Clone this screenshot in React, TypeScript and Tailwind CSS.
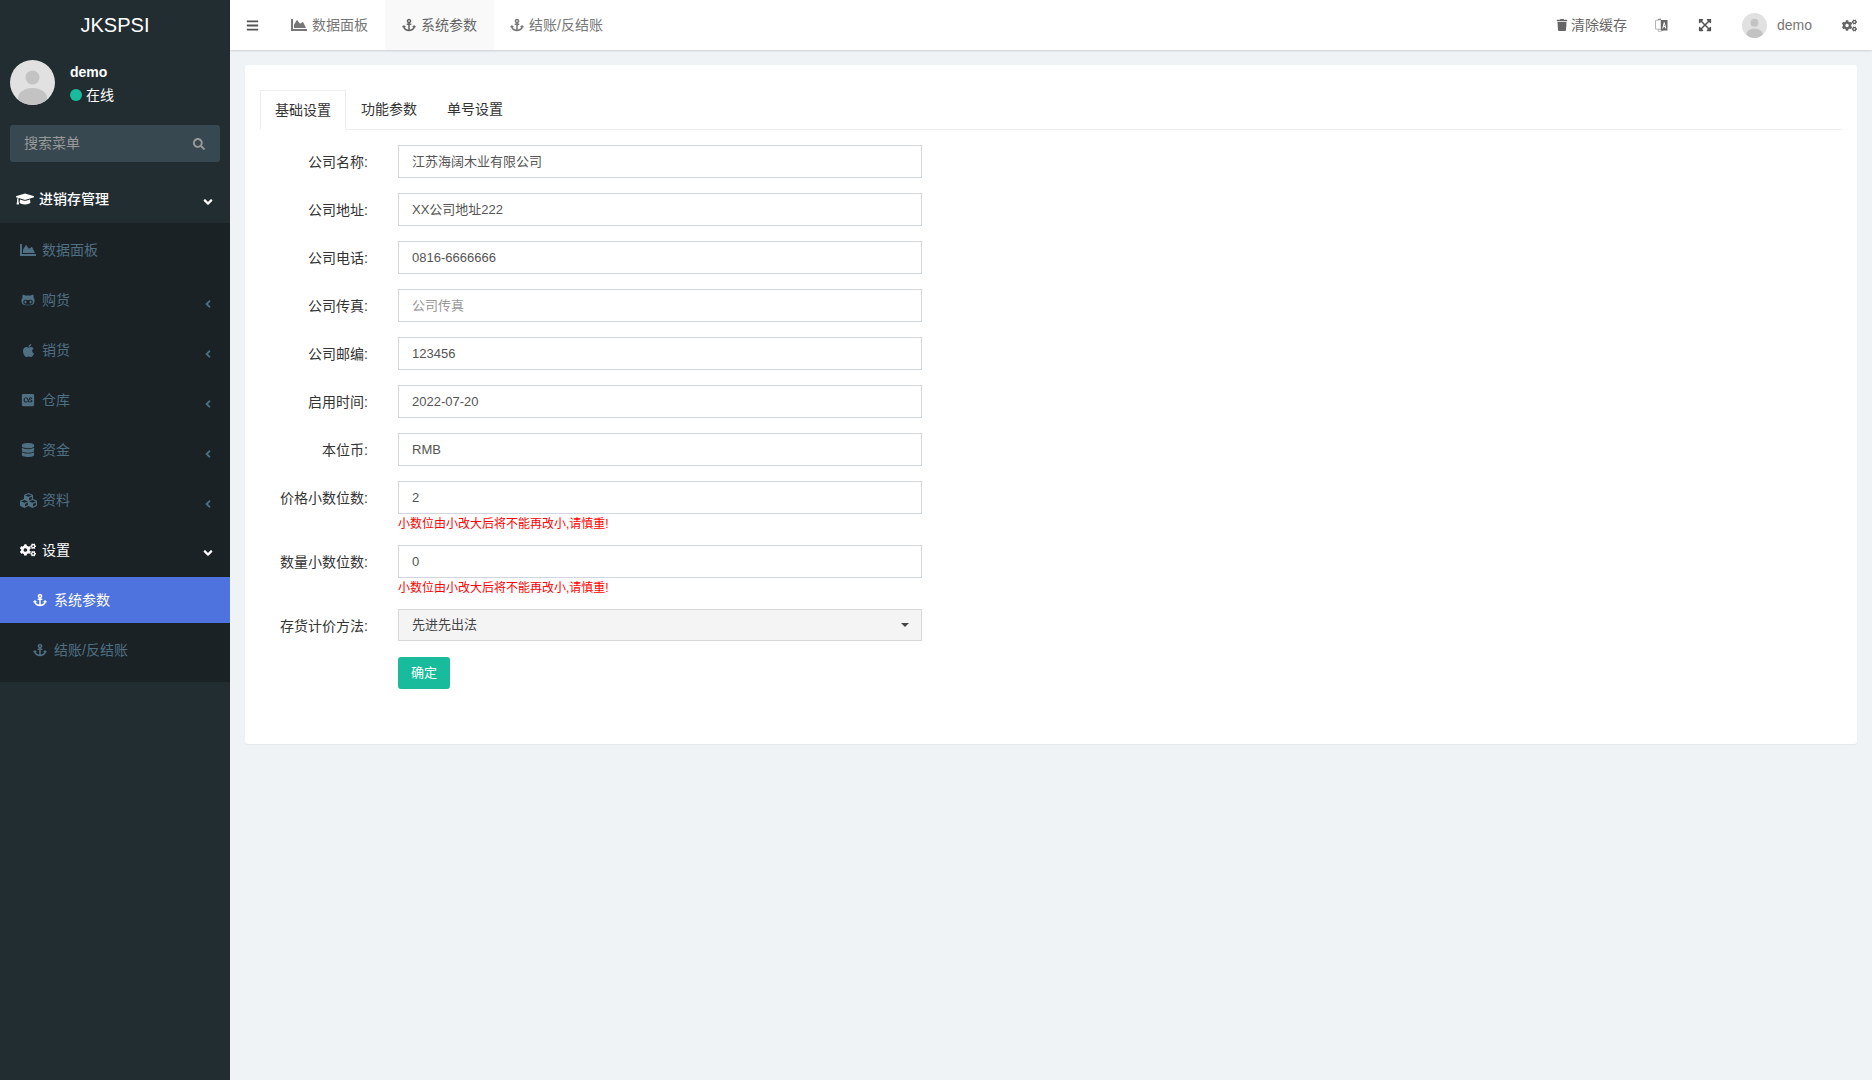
import React from "react";
import { FaBars, FaChartArea, FaAnchor, FaTrash, FaExpandArrowsAlt, FaCogs, FaGraduationCap, FaAngleDown, FaAngleLeft, FaGithubAlt, FaApple, FaLastfmSquare, FaDatabase, FaCubes, FaSearch } from "react-icons/fa";

const FONT = "font-['Liberation_Sans','Noto_Sans_CJK_SC',sans-serif]";

function Avatar({ size }: { size: number }) {
  return (
    <svg width={size} height={size} viewBox="0 0 45 45" className="shrink-0">
      <defs>
        <clipPath id={`c${size}`}><circle cx="22.5" cy="22.5" r="22.5" /></clipPath>
      </defs>
      <g clipPath={`url(#c${size})`}>
        <rect width="45" height="45" fill="#e1e1e1" />
        <circle cx="22.5" cy="17.5" r="7" fill="#c3c3c3" />
        <ellipse cx="22.5" cy="38" rx="14.5" ry="10" fill="#c3c3c3" />
      </g>
    </svg>
  );
}

function TranslateIcon() {
  return (
    <svg width="13" height="14" viewBox="0 0 13 14" className="shrink-0">
      <path d="M0.5 2.5 L6 1.5 V11.5 L0.5 11 Z" fill="#fff" stroke="#b5b5b5" strokeWidth="1" />
      <path d="M3 11.5 L3.5 13.5 L8.5 12.5" fill="none" stroke="#b5b5b5" strokeWidth="1" />
      <path d="M6 2 H12.5 V12.5 H6 Z" fill="#666" />
      <path d="M7.7 10.5 L9.25 4.5 L10.8 10.5 M8.4 8.6 H10.1" fill="none" stroke="#fff" strokeWidth="1" />
      <path d="M3 1 L6 0.5 V2 H3 Z" fill="#888" />
    </svg>
  );
}

const menu = [
  { icon: FaGithubAlt, label: "购货", size: "text-[14px]" },
  { icon: FaApple, label: "销货", size: "text-[15px]" },
  { icon: FaLastfmSquare, label: "仓库", size: "text-[14px]" },
  { icon: FaDatabase, label: "资金", size: "text-[14px]" },
  { icon: FaCubes, label: "资料", size: "text-[17px]" },
];

function Sidebar() {
  return (
    <aside className="w-[230px] shrink-0 bg-[#222d32] min-h-[1080px]">
      <div className="h-[50px] flex items-center justify-center text-white text-[20px] leading-[50px]">JKSPSI</div>
      <div className="h-[60px] flex items-start pt-[10px] pl-[10px] gap-[15px]">
        <Avatar size={45} />
        <div className="text-white text-[14px] mt-[2px]">
          <div className="font-bold leading-[20px] mb-[3px]">demo</div>
          <div className="flex items-center gap-[4px] leading-[20px]">
            <span className="w-3 h-3 rounded-full bg-[#18bc9c]" />
            <span>在线</span>
          </div>
        </div>
      </div>
      <div className="mx-[10px] mt-[15px] h-[37px] rounded-[3px] bg-[#374850] flex items-center justify-between pl-[14px] pr-[15px] text-[#999] text-[14px]">
        <span>搜索菜单</span>
        <FaSearch className="text-[12px] text-[#999]" />
      </div>
      <div className="h-[51px] mt-[10px] flex items-center justify-between pl-[16px] pr-[15px] text-white text-[14px] font-medium pt-[3px]">
        <span className="flex items-center gap-[5px]"><FaGraduationCap className="text-[18px]" />进销存管理</span>
        <FaAngleDown className="text-[14px] mt-[6px]" />
      </div>
      <div className="bg-[#1a2226] pt-[2px] pb-[5px]">
        <div className="h-[50px] flex items-center pl-[19px] gap-[5px] text-[#4f6f82] text-[14px]">
          <span className="w-[18px] flex justify-center"><FaChartArea className="text-[16px]" /></span>数据面板
        </div>
        {menu.map((m) => (
          <div key={m.label} className="h-[50px] flex items-center justify-between pl-[19px] pr-[16px] text-[#4f6f82] text-[14px]">
            <span className="flex items-center gap-[5px]"><span className="w-[18px] flex justify-center"><m.icon className={m.size} /></span>{m.label}</span>
            <FaAngleLeft className="text-[12px] mt-[7px]" />
          </div>
        ))}
        <div className="h-[50px] mb-[2px] flex items-center justify-between pl-[19px] pr-[15px] text-white text-[14px]">
          <span className="flex items-center gap-[5px]"><span className="w-[18px] flex justify-center"><FaCogs className="text-[16px]" /></span>设置</span>
          <FaAngleDown className="text-[14px] mt-[6px]" />
        </div>
        <div className="h-[46px] bg-[#4e73df] flex items-center pl-[33px] gap-[7px] text-white text-[14px]">
          <FaAnchor className="text-[14px] w-[14px]" />系统参数
        </div>
        <div className="h-[54px] flex items-center pl-[33px] gap-[7px] text-[#4f6f82] text-[14px]">
          <FaAnchor className="text-[14px] w-[14px]" />结账/反结账
        </div>
      </div>
    </aside>
  );
}

function Header() {
  return (
    <header className="h-[50px] bg-white flex items-center justify-between shadow-[0_1px_2px_rgba(0,0,0,0.15)] text-[#777] text-[14px] relative">
      <div className="flex items-center h-full">
        <FaBars className="ml-[16px] text-[13px] text-[#555] shrink-0" />
        <div className="ml-[16px] pl-[16px] h-full flex items-center gap-[5px] w-[110px] whitespace-nowrap"><FaChartArea className="text-[16px] shrink-0" />数据面板</div>
        <div className="w-[109px] h-full bg-[#f9f9f9] flex items-center justify-center gap-[5px] text-[#666] whitespace-nowrap"><FaAnchor className="text-[14px] shrink-0" />系统参数</div>
        <div className="pl-[16px] flex items-center gap-[5px] whitespace-nowrap"><FaAnchor className="text-[14px] shrink-0" />结账/反结账</div>
      </div>
      <div className="flex items-center h-full pr-[15px]">
        <span className="flex items-center gap-[3px] text-[#666]"><FaTrash className="text-[12px]" />清除缓存</span>
        <span className="ml-[28px]"><TranslateIcon /></span>
        <FaExpandArrowsAlt className="ml-[30px] text-[14px] text-[#555]" />
        <span className="ml-[30px]"><Avatar size={25} /></span>
        <span className="ml-[10px]">demo</span>
        <FaCogs className="ml-[30px] text-[15px] text-[#666]" />
      </div>
    </header>
  );
}

function Row({ label, value, placeholder, hint }: { label: string; value?: string; placeholder?: string; hint?: boolean }) {
  return (
    <div className={`flex ${hint ? "mb-[13px]" : "mb-[15px]"}`}>
      <label className="w-[108px] shrink-0 text-right text-[#333] text-[14px] leading-[20px] pt-[7px]">{label}:</label>
      <div className="ml-[30px] w-[524px]">
        <div className={`h-[33px] border border-[#d2d6de] bg-white pl-[13px] pr-[12px] flex items-center text-[13px] ${placeholder ? "text-[#999]" : "text-[#555]"}`}>
          {value ?? placeholder}
        </div>
        {hint && <div className="text-[#f00] text-[12px] leading-[18px] h-[18px] pt-[1px]">小数位由小改大后将不能再改小,请慎重!</div>}
      </div>
    </div>
  );
}

export default function App() {
  return (
    <div className={`flex min-h-[1080px] bg-[#eff3f6] ${FONT}`}>
      <Sidebar />
      <div className="flex-1 min-w-0">
        <Header />
        <main className="pt-[15px] px-[15px]">
          <div className="bg-white rounded-[3px] h-[679px] pt-[25px] px-[15px] shadow-[0_1px_1px_rgba(0,0,0,0.05)]">
            <div className="flex h-[40px] border-b border-[#eeeeee] text-[14px] text-[#333] mb-[15px]">
              <div className="w-[86px] h-[40px] border border-[#eeeeee] border-b-white bg-white flex items-center justify-center">基础设置</div>
              <div className="w-[86px] h-[39px] flex items-center justify-center">功能参数</div>
              <div className="w-[86px] h-[39px] flex items-center justify-center">单号设置</div>
            </div>
            <Row label="公司名称" value="江苏海阔木业有限公司" />
            <Row label="公司地址" value="XX公司地址222" />
            <Row label="公司电话" value="0816-6666666" />
            <Row label="公司传真" placeholder="公司传真" />
            <Row label="公司邮编" value="123456" />
            <Row label="启用时间" value="2022-07-20" />
            <Row label="本位币" value="RMB" />
            <Row label="价格小数位数" value="2" hint />
            <Row label="数量小数位数" value="0" hint />
            <div className="flex mb-[16px]">
              <label className="w-[108px] shrink-0 text-right text-[#333] text-[14px] leading-[20px] pt-[7px]">存货计价方法:</label>
              <div className="ml-[30px] w-[524px] h-[32px] border border-[#d8d8d8] bg-[#f4f4f4] pl-[13px] pr-[12px] flex items-center justify-between text-[13px] text-[#444]">
                先进先出法
                <span className="w-0 h-0 border-x-[4px] border-x-transparent border-t-[4px] border-t-[#444]" />
              </div>
            </div>
            <div className="ml-[138px] w-[52px] h-[32px] rounded-[3px] bg-[#18bc9c] text-white text-[13px] flex items-center justify-center">确定</div>
          </div>
        </main>
      </div>
    </div>
  );
}
